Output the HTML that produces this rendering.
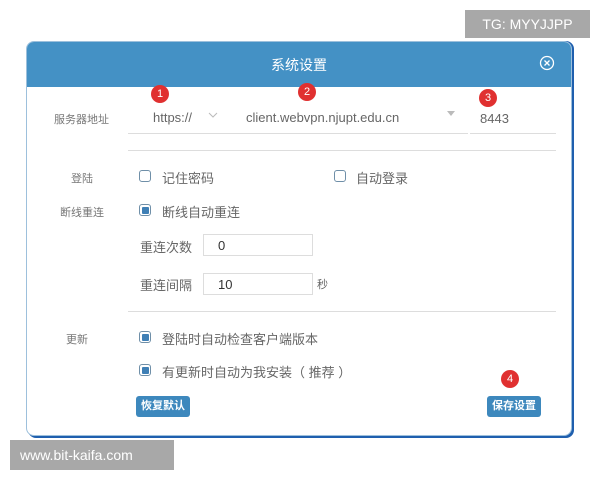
<!DOCTYPE html>
<html><head><meta charset="utf-8"><style>
body{margin:0;width:600px;height:480px;background:#fff;position:relative;overflow:hidden;font-family:"Liberation Sans","Noto Sans CJK SC",sans-serif;}
.a{position:absolute;}
.bg{left:28px;top:41px;width:546px;height:397px;background:#1f5fae;border-radius:8px;}
.dlg{left:26px;top:41px;width:546px;height:395px;background:#fff;border-radius:8px;overflow:hidden;border:1px solid #9dc0dc;box-sizing:border-box;}
.hd{left:0;top:0;width:100%;height:45px;background:#4491c5;color:#fff;font-size:14px;text-align:center;line-height:46px;}
.lbl{font-size:11px;color:#777;}
.t{font-size:13px;color:#666;}
.line{height:1px;background:#ddd;}
.badge{width:18px;height:18px;border-radius:50%;background:#e03030;color:#fff;font-size:11px;text-align:center;line-height:18px;}
.cb{width:10px;height:10px;border:1.5px solid #6f8fa8;border-radius:3px;}
.cbc{width:10px;height:10px;border:1.5px solid #6f8fa8;border-radius:3px;background:#fff;}
.cbc::after{content:"";position:absolute;left:1.5px;top:1.5px;width:7px;height:7px;background:#3f7fb5;border-radius:1px;}
.inp{width:110px;height:22px;border:1px solid #ddd;font-size:13px;color:#333;line-height:21px;padding-left:14px;box-sizing:border-box;}
.btn{background:#3d88bd;color:#fff;font-size:11px;font-weight:bold;border-radius:3px;height:21px;line-height:21px;text-align:center;}
.wm{background:#a8a8a8;color:#fff;font-size:14px;}
</style></head><body>
<div class="a bg"></div>
<div class="a dlg">
 <div class="a hd">系统设置</div>
 <svg class="a" style="left:512px;top:13px" width="16" height="16" viewBox="0 0 16 16"><circle cx="8" cy="8" r="6.5" fill="none" stroke="#fff" stroke-width="1.3"/><path d="M5.5 5.5L10.5 10.5M10.5 5.5L5.5 10.5" stroke="#fff" stroke-width="1.3"/></svg>
</div>
<div class="a lbl" style="left:54px;top:111px">服务器地址</div>
<div class="a t" style="left:153px;top:110px">https://</div>
<svg class="a" style="left:208px;top:112px" width="10" height="6"><path d="M1 1L5 5L9 1" fill="none" stroke="#bbb" stroke-width="1"/></svg>
<div class="a line" style="left:128px;top:133px;width:340px"></div>
<div class="a t" style="left:246px;top:110px">client.webvpn.njupt.edu.cn</div>
<svg class="a" style="left:446px;top:110px" width="10" height="7"><path d="M1 1H9L5 6Z" fill="#bbb"/></svg>
<div class="a t" style="left:480px;top:111px">8443</div>
<div class="a line" style="left:470px;top:133px;width:86px"></div>
<div class="a badge" style="left:151px;top:85px">1</div>
<div class="a badge" style="left:298px;top:83px">2</div>
<div class="a badge" style="left:479px;top:89px">3</div>
<div class="a line" style="left:128px;top:150px;width:428px"></div>
<div class="a lbl" style="left:71px;top:170px">登陆</div>
<div class="a cb" style="left:139px;top:170px"></div>
<div class="a t" style="left:162px;top:168px">记住密码</div>
<div class="a cb" style="left:334px;top:170px"></div>
<div class="a t" style="left:356px;top:168px">自动登录</div>
<div class="a lbl" style="left:60px;top:204px">断线重连</div>
<div class="a cbc" style="left:139px;top:204px"></div>
<div class="a t" style="left:162px;top:202px">断线自动重连</div>
<div class="a t" style="left:140px;top:237px">重连次数</div>
<div class="a inp" style="left:203px;top:234px">0</div>
<div class="a t" style="left:140px;top:275px">重连间隔</div>
<div class="a inp" style="left:203px;top:273px">10</div>
<div class="a t" style="left:317px;top:276px;font-size:11px">秒</div>
<div class="a line" style="left:128px;top:311px;width:428px"></div>
<div class="a lbl" style="left:66px;top:331px">更新</div>
<div class="a cbc" style="left:139px;top:331px"></div>
<div class="a t" style="left:162px;top:329px">登陆时自动检查客户端版本</div>
<div class="a cbc" style="left:139px;top:364px"></div>
<div class="a t" style="left:162px;top:362px">有更新时自动为我安装（ 推荐 ）</div>
<div class="a badge" style="left:501px;top:370px">4</div>
<div class="a btn" style="left:136px;top:396px;width:54px">恢复默认</div>
<div class="a btn" style="left:487px;top:396px;width:54px">保存设置</div>
<div class="a wm" style="left:465px;top:10px;width:125px;height:28px;line-height:28px;text-align:center">TG: MYYJJPP</div>
<div class="a wm" style="left:10px;top:440px;width:164px;height:30px;line-height:30px;padding-left:10px;box-sizing:border-box">www.bit-kaifa.com</div>
</body></html>
